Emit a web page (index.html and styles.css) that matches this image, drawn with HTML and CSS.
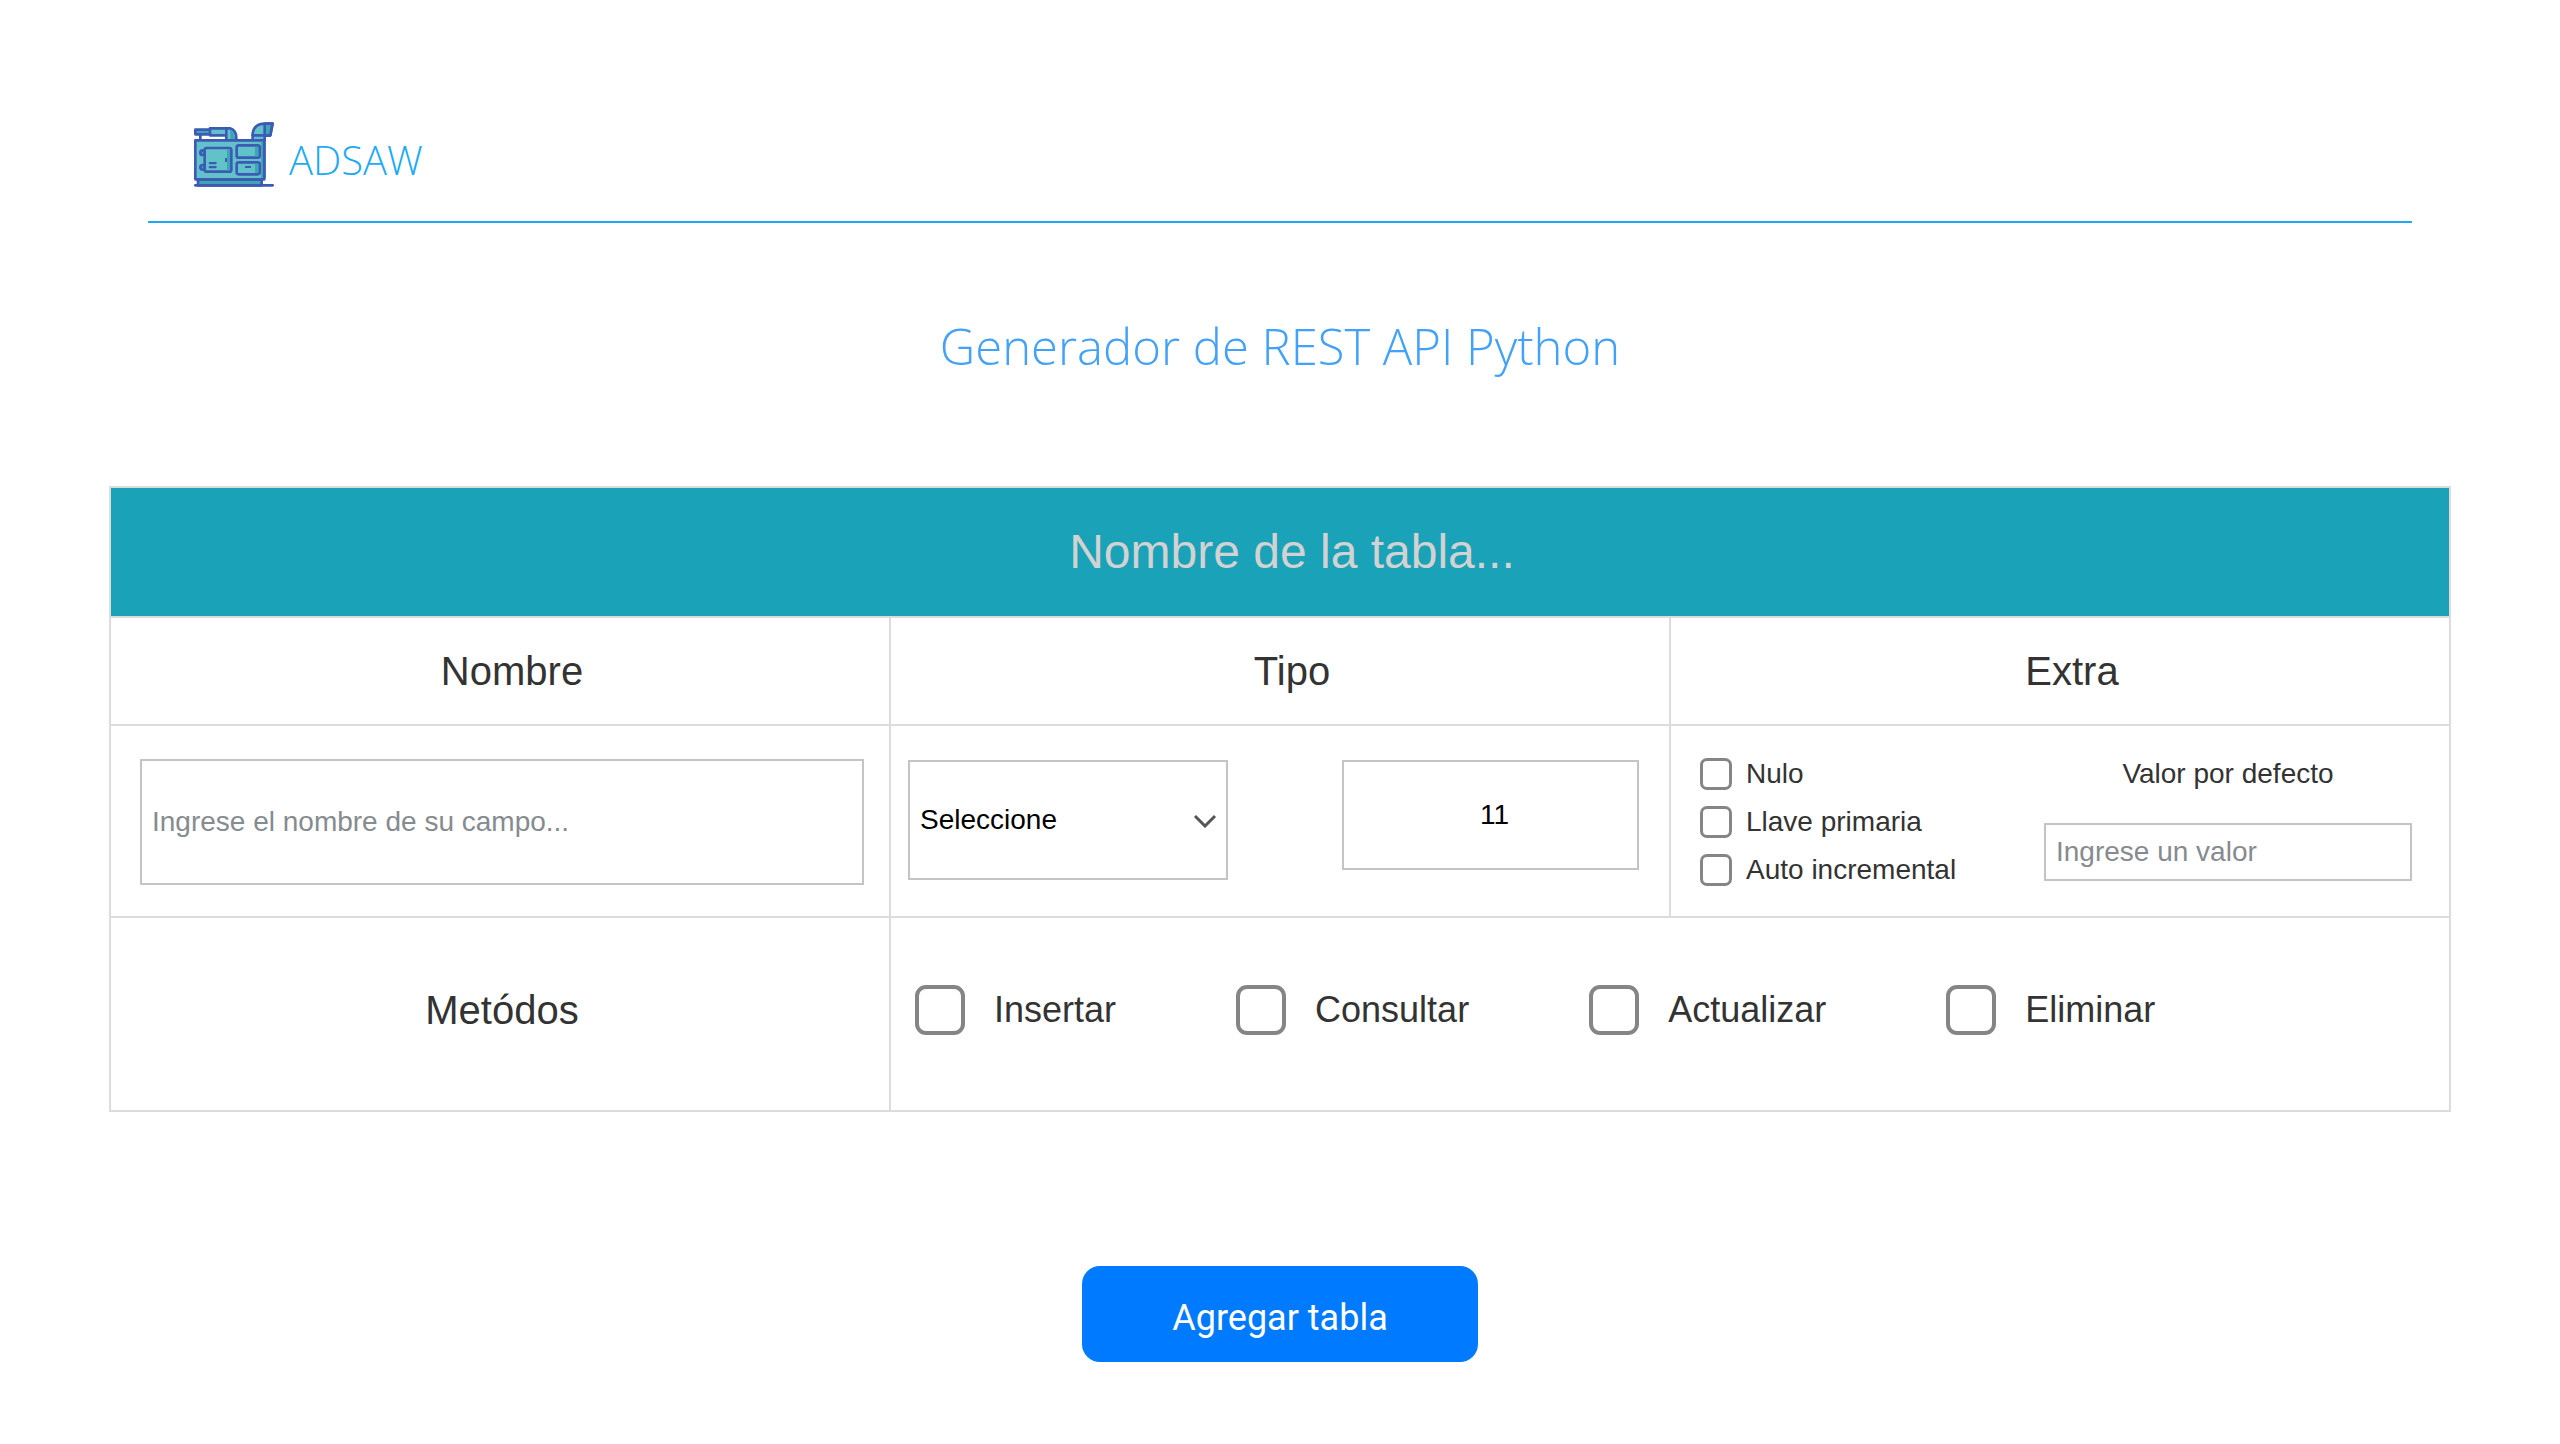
FILE: index.html
```html
<!DOCTYPE html>
<html lang="es">
<head>
<meta charset="utf-8">
<title>ADSAW</title>
<link rel="stylesheet" href="styles.css">
</head>
<body>
<header class="topbar">
  <a class="brand" href="#">
    <svg class="brand-logo" viewBox="42 36 240 195" aria-hidden="true">
      <g stroke="#3d5ab5" stroke-width="8" stroke-linejoin="round" stroke-linecap="round">
        <path d="M61 76V92" fill="none"/>
        <rect x="46" y="59" width="46" height="14" fill="#3da6b4"/>
        <rect x="90" y="55" width="49" height="21" fill="#62c2ca"/>
        <path d="M139 55H150Q169 61 169 84V92H139Z" fill="#62c2ca"/>
        <path d="M218 92V70Q222 41 256 41H278L271 76H254V92Z" fill="#62c2ca"/>
        <path d="M254 41H277L271 76H254Z" fill="#3da6b4"/>
        <path d="M218 76H270" fill="none"/>
        <rect x="54" y="208" width="191" height="18" fill="#3da6b4"/>
        <rect x="46" y="91" width="207" height="117" fill="#62c2ca"/>
        <circle cx="68" cy="128" r="7" fill="#3da6b4"/>
        <circle cx="68" cy="172" r="7" fill="#3da6b4"/>
        <rect x="74" y="114" width="80" height="71" rx="6" fill="#62c2ca"/>
        <rect x="170" y="106" width="69" height="37" rx="6" fill="#62c2ca"/>
        <rect x="170" y="157" width="69" height="36" rx="6" fill="#62c2ca"/>
        <path d="M46 226H278" fill="none"/>
      </g>
      <g fill="#3da6b4">
        <rect x="141" y="118" width="9" height="63"/>
        <rect x="225" y="110" width="10" height="29"/>
        <rect x="225" y="161" width="10" height="28"/>
        <rect x="243" y="95" width="6" height="109"/>
        <path d="M150 59Q165 66 165 87H151Z"/>
      </g>
      <g fill="#3d5ab5">
        <rect x="249" y="95" width="8" height="109"/>
        <rect x="86" y="156" width="24" height="7" rx="3"/>
        <rect x="86" y="168" width="24" height="7" rx="3"/>
        <rect x="195" y="168" width="18" height="6"/>
        <rect x="135" y="144" width="6" height="12"/>
      </g>
    </svg>
    <span class="brand-name">ADSAW</span>
  </a>
</header>
<main class="content">
  <h1 class="title">Generador de REST API Python</h1>
  <form class="generator">
    <table class="schema">
      <thead>
        <tr class="row-name">
          <th colspan="3"><input class="table-name" type="text" placeholder="Nombre de la tabla..." aria-label="Nombre de la tabla"></th>
        </tr>
        <tr class="row-heads">
          <th>Nombre</th>
          <th>Tipo</th>
          <th>Extra</th>
        </tr>
      </thead>
      <tbody>
        <tr class="row-field">
          <td class="cell-name"><input class="box field-name" type="text" placeholder="Ingrese el nombre de su campo..." aria-label="Nombre del campo"></td>
          <td class="cell-type">
            <div class="type">
              <div class="select-wrap">
                <select class="box type-select" aria-label="Tipo"><option>Seleccione</option></select>
                <svg class="chevron" viewBox="0 0 24 14" aria-hidden="true"><path d="M2 2L12 12L22 2" fill="none" stroke="#555" stroke-width="3"/></svg>
              </div>
              <input class="box type-size" type="text" value="11" aria-label="Longitud">
            </div>
          </td>
          <td class="cell-extra">
            <div class="extra">
              <div class="flags">
                <label class="flag"><input class="check" type="checkbox">Nulo</label>
                <label class="flag"><input class="check" type="checkbox">Llave primaria</label>
                <label class="flag"><input class="check" type="checkbox">Auto incremental</label>
              </div>
              <div class="default">
                <label for="default-value">Valor por defecto</label>
                <input class="box default-value" id="default-value" type="text" placeholder="Ingrese un valor">
              </div>
            </div>
          </td>
        </tr>
        <tr class="row-methods">
          <th scope="row">Metódos</th>
          <td colspan="2">
            <div class="methods">
              <label class="method"><input class="check check-large" type="checkbox">Insertar</label>
              <label class="method"><input class="check check-large" type="checkbox">Consultar</label>
              <label class="method"><input class="check check-large" type="checkbox">Actualizar</label>
              <label class="method"><input class="check check-large" type="checkbox">Eliminar</label>
            </div>
          </td>
        </tr>
      </tbody>
    </table>
    <button class="add" type="button">Agregar tabla</button>
  </form>
</main>
</body>
</html>
```

FILE: styles.css
```css
* {
  box-sizing: border-box;
}

body {
  margin: 0;
  background: #fff;
  color: #333;
  font-family: "Liberation Sans", Arial, sans-serif;
  font-size: 28px;
  line-height: 32px;
}

.topbar {
  margin: 0 148px;
  padding: 122px 46px 34px;
  border-bottom: 2px solid #1caaf6;
}

.brand {
  display: flex;
  gap: 15px;
  height: 65px;
  color: #1caaf6;
  text-decoration: none;
}

.brand-logo {
  width: 80px;
  height: 65px;
}

.brand-name {
  padding-top: 10px;
  font-family: "Open Sans", sans-serif;
  font-size: 40px;
  font-weight: 300;
  line-height: 56px;
}

.content {
  padding: 0 109px;
}

.title {
  margin: 87px 0 0;
  color: #42a1f8;
  font-family: "Open Sans", sans-serif;
  font-size: 49px;
  font-weight: 300;
  line-height: 72px;
  text-align: center;
}

.generator {
  display: flex;
  flex-direction: column;
  align-items: center;
  margin-top: 104px;
}

.schema {
  width: 100%;
  table-layout: fixed;
  border-collapse: collapse;
}

.schema th,
.schema td {
  padding: 0;
  border: 2px solid #dcdcdc;
  font-weight: 400;
}

.schema th {
  padding-left: 24px;
  font-size: 40px;
}

.row-name {
  height: 130px;
  background: #19a2b8;
}

.row-heads {
  height: 108px;
}

.row-field {
  height: 192px;
}

.row-methods {
  height: 194px;
}

.schema .row-methods th {
  padding: 0 0 8px 4px;
}

.schema .row-methods td {
  padding: 0 24px 8px;
}

.table-name {
  display: block;
  width: 100%;
  height: 96px;
  padding: 0 0 2px;
  border: 0;
  background: transparent;
  color: #fff;
  font: inherit;
  font-size: 48px;
  text-align: center;
}

.table-name::placeholder {
  color: #d2d2d2;
  opacity: 1;
}

.box {
  display: block;
  border: 2px solid #c4c4c4;
  border-radius: 0;
  background: #fff;
  color: #000;
  font: inherit;
  padding: 0 10px;
}

.box::placeholder {
  color: #868b90;
  opacity: 1;
}

.schema .cell-name {
  padding: 2px 25px 0 29px;
}

.field-name {
  width: 100%;
  height: 126px;
}

.schema .cell-type {
  padding: 0 30px 2px 17px;
}

.type {
  display: flex;
  align-items: flex-start;
  justify-content: space-between;
}

.select-wrap {
  position: relative;
  width: 320px;
}

.type-select {
  appearance: none;
  width: 100%;
  height: 120px;
}

.chevron {
  position: absolute;
  top: 54px;
  right: 11px;
  width: 24px;
  height: 14px;
  pointer-events: none;
}

.type-size {
  width: 297px;
  height: 110px;
  padding: 0 0 0 8px;
  text-align: center;
}

.schema .cell-extra {
  padding: 2px 37px 0 29px;
}

.extra {
  display: flex;
  justify-content: space-between;
}

.flags {
  display: flex;
  flex-direction: column;
  gap: 16px;
}

.flag {
  display: flex;
  align-items: center;
  gap: 14px;
}

.check {
  appearance: none;
  width: 32px;
  height: 32px;
  margin: 0;
  border: 3px solid #858585;
  border-radius: 7px;
  background: #fff;
}

.check-large {
  width: 50px;
  height: 50px;
  border-width: 4px;
  border-radius: 11px;
}

.default {
  display: flex;
  flex-direction: column;
  gap: 33px;
  width: 368px;
  text-align: center;
}

.default-value {
  width: 100%;
  height: 58px;
}

.methods {
  display: flex;
  gap: 120px;
}

.method {
  display: flex;
  align-items: center;
  gap: 29px;
  font-size: 36px;
}

.add {
  width: 396px;
  height: 96px;
  margin-top: 154px;
  padding: 8px 0 0;
  border: 0;
  border-radius: 18px;
  background: #007aff;
  color: #fff;
  font-family: Roboto, sans-serif;
  font-size: 36px;
}
```
